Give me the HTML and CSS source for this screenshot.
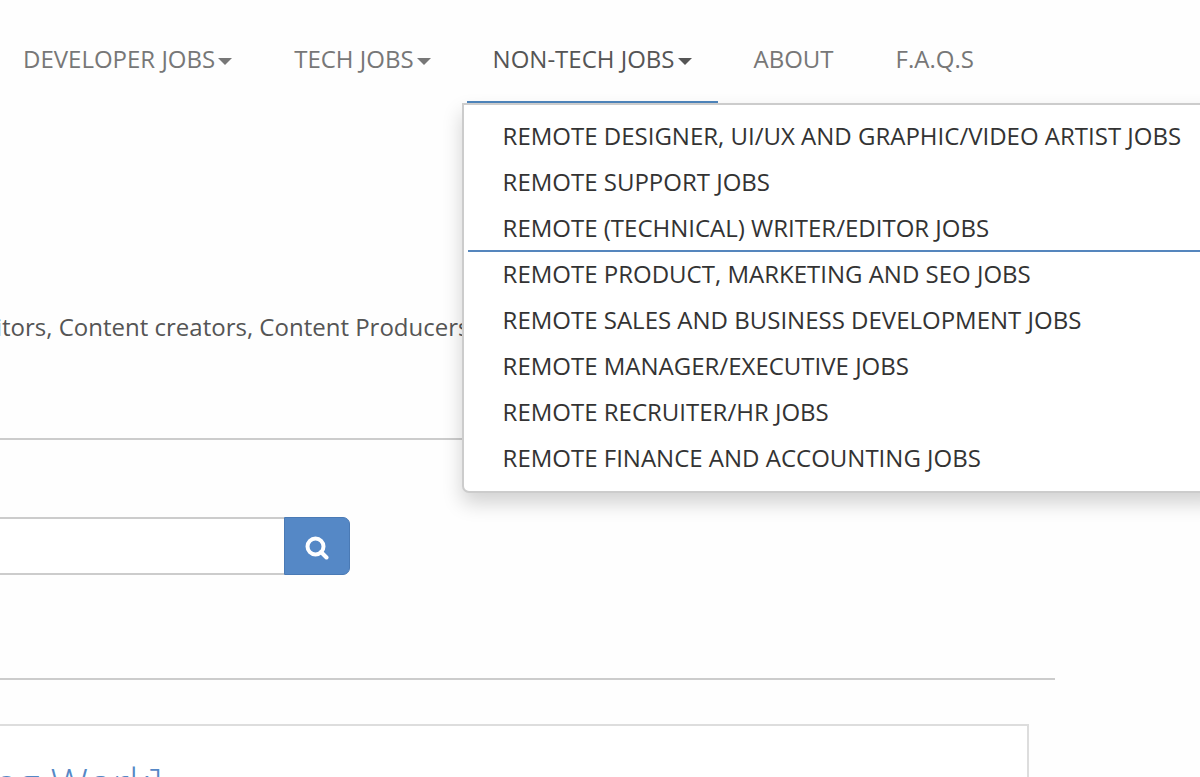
FILE: index.html
```html
<!DOCTYPE html>
<html lang="en">
<head>
  <meta charset="UTF-8">
  <title>Remote Jobs</title>
  <link rel="stylesheet" href="styles.css">
</head>
<body>
  <nav class="navbar">
    <ul class="nav">
      <li><a href="#">DEVELOPER JOBS<span class="caret"></span></a></li>
      <li><a href="#">TECH JOBS<span class="caret"></span></a></li>
      <li class="dropdown open">
        <a href="#">NON-TECH JOBS<span class="caret"></span></a>
        <ul class="dropdown-menu">
          <li><a href="#">REMOTE DESIGNER, UI/UX AND GRAPHIC/VIDEO ARTIST JOBS</a></li>
          <li><a href="#">REMOTE SUPPORT JOBS</a></li>
          <li class="active"><a href="#">REMOTE (TECHNICAL) WRITER/EDITOR JOBS</a></li>
          <li><a href="#">REMOTE PRODUCT, MARKETING AND SEO JOBS</a></li>
          <li><a href="#">REMOTE SALES AND BUSINESS DEVELOPMENT JOBS</a></li>
          <li><a href="#">REMOTE MANAGER/EXECUTIVE JOBS</a></li>
          <li><a href="#">REMOTE RECRUITER/HR JOBS</a></li>
          <li><a href="#">REMOTE FINANCE AND ACCOUNTING JOBS</a></li>
        </ul>
      </li>
      <li><a href="#">ABOUT</a></li>
      <li><a href="#">F.A.Q.S</a></li>
    </ul>
  </nav>

  <main class="content">
    <p class="intro">itors, Content creators, Content Producers</p>
    <hr>
    <form class="search">
      <input type="text" class="search-input" aria-label="Search jobs">
      <button type="button" class="search-btn" aria-label="Search">
        <svg width="24" height="24" viewBox="0 0 24 24" fill="none" stroke="#fff">
          <circle cx="10.5" cy="10.5" r="8" stroke-width="4"/>
          <path d="M16 16L21.5 21.5" stroke-width="4" stroke-linecap="round"/>
        </svg>
      </button>
    </form>
    <hr>
    <article class="job">
      <h2><a href="#">ng Work]</a></h2>
    </article>
  </main>
</body>
</html>
```

FILE: styles.css
```css
* {
  box-sizing: border-box;
}
body {
  margin: 0;
  font-family: "Open Sans", sans-serif;
  font-size: 24px;
  line-height: 34px;
  color: #555;
  background: #fefefe;
  overflow: hidden;
}
a {
  text-decoration: none;
}

/* navigation */
.navbar {
  padding-top: 16px;
}
.nav {
  display: flex;
  gap: 10px;
  margin: 0 0 0 -3px;
  padding: 0;
  list-style: none;
  white-space: nowrap;
}
.nav > li > a {
  display: block;
  padding: 26px 26px 25px;
  border-bottom: 2px solid transparent;
  color: #777;
}
.nav > .open > a {
  color: #555;
  border-bottom-color: #4f86bd;
}
.caret {
  display: inline-block;
  margin-left: 3px;
  vertical-align: middle;
  border-top: 7px solid;
  border-left: 7px solid transparent;
  border-right: 7px solid transparent;
}

/* dropdown */
.dropdown {
  position: relative;
}
.dropdown-menu {
  position: absolute;
  top: 100%;
  left: -5px;
  z-index: 10;
  margin: 0;
  padding: 9px 4px;
  list-style: none;
  background: #fff;
  border: 2px solid #ccc;
  border-radius: 0 0 7px 7px;
  box-shadow: 0 10px 20px rgba(0, 0, 0, 0.18);
}
.dropdown-menu a {
  display: block;
  padding: 5px 35px;
  border-bottom: 2px solid transparent;
  color: #333;
}
.dropdown-menu .active a {
  border-bottom-color: #5586bd;
}

/* page content */
.content {
  margin-right: 145px;
  padding-top: 207px;
}
.intro {
  margin: 0 0 94px -4px;
  white-space: nowrap;
}
hr {
  margin: 0;
  border: 0;
  border-top: 2px solid #ccc;
}
.search {
  display: flex;
  width: 350px;
  height: 58px;
  margin: 77px 0 103px;
}
.search-input {
  flex: 1;
  min-width: 0;
  padding: 10px 20px;
  border: 2px solid #ccc;
  border-width: 2px 0;
  font: inherit;
  background: #fff;
}
.search-btn {
  display: flex;
  align-items: center;
  justify-content: center;
  width: 66px;
  padding: 4px 0 0;
  border: 1px solid #4a7ab5;
  border-radius: 0 7px 7px 0;
  background: #5588c6;
}
.job {
  margin: 44px 26px 0 0;
  padding: 34px 0;
  border: 2px solid #ddd;
  border-left: 0;
  background: #fff;
}
.job h2 {
  margin: 0 0 0 -7px;
  font-size: 42px;
  font-weight: 300;
  line-height: 46px;
}
.job a {
  color: #5588c6;
}
```
